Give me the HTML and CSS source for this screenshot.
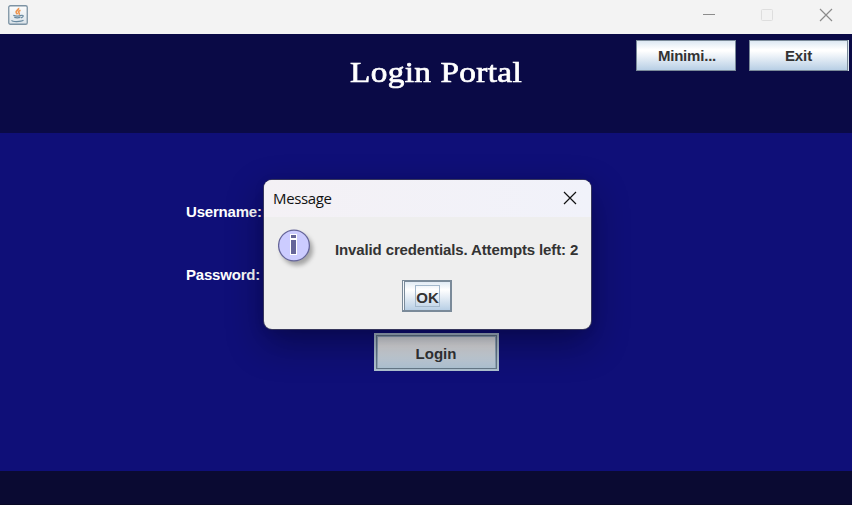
FILE: index.html
```html
<!DOCTYPE html>
<html lang="en">
<head>
<meta charset="utf-8">
<title>Login Portal</title>
<link rel="stylesheet" href="styles.css">
</head>
<body>
<div class="window">
  <div class="titlebar">
    <svg class="java" width="20" height="20" viewBox="0 0 20 20" fill="none">
      <defs><linearGradient id="tile" x1="0" y1="0" x2="0" y2="1"><stop offset="0" stop-color="#fdfdfd"/><stop offset="1" stop-color="#d9e2e9"/></linearGradient></defs>
      <rect x=".75" y=".75" width="18.5" height="18.5" rx="1.6" fill="url(#tile)" stroke="#7d93a4" stroke-width="1.3"/>
      <path d="M10.500 2.800c1 2-3.300 2.900-2.300 4.800.3.600.9 1.100 1.300 1.600M12.500 5.300c-2.500 1.200-2.200 1.900-1.300 3 .3.600 0 .9-.4 1.300" stroke="#ee9650" stroke-width="1.700"/>
      <path d="M5.300 10.400c2 .8 6.200.7 8.100 0M6.300 12.400c1.900.6 4.400.5 6.100 0M13.400 10.300c2.800-.5 2.200 2-.4 2.500M4 15.300c-1 1.600 9 1.700 11.500 0" stroke="#67889f" stroke-width="1.200"/>
    </svg>
    <svg class="controls" width="132" height="14" viewBox="0 0 132 14" fill="none">
      <path d="M1 6.500h12" stroke="#8c8c8c"/>
      <rect x="59.500" y="1.500" width="11" height="11" rx="1" stroke="#dedede"/>
      <path d="M118 1l12 12M130 1L118 13" stroke="#8b8b8b" stroke-width="1.200"/>
    </svg>
  </div>
  <header class="header">
    <h1 class="title">Login Portal</h1>
    <div class="actions">
      <button class="metal minimize">Minimi...</button>
      <button class="metal exit">Exit</button>
    </div>
  </header>
  <main class="main">
    <div class="labels">
      <label>Username:</label>
      <label>Password:</label>
    </div>
    <button class="login"><span>Login</span></button>
  </main>
  <footer class="footer"></footer>
  <section class="dialog" role="dialog">
    <div class="dialog-bar">
      <span>Message</span>
      <svg width="14" height="14" viewBox="0 0 14 14" fill="none"><path d="M1 1l12 12M13 1L1 13" stroke="#111" stroke-width="1.200"/></svg>
    </div>
    <div class="message">
      <svg class="info" width="42" height="42" viewBox="0 0 42 42">
        <circle cx="16" cy="16.500" r="15.400" fill="#ccccff" stroke="#666699" stroke-width="1.300"/>
        <path d="M12 5h7v5h-7zM12 10h7v16h-7z" fill="#fff"/>
        <path d="M13 6h5v3h-5zM13 11h5v14h-5z" fill="#666699"/>
      </svg>
      <p>Invalid credentials. Attempts left: 2</p>
    </div>
    <button class="ok"><span>OK</span></button>
  </section>
</div>
</body>
</html>
```
FILE: styles.css
```css
* { box-sizing: border-box; }
body { margin: 0; font: bold 15px/17px "Liberation Sans", sans-serif; color: #333; overflow: hidden; }
button { padding: 0; font: inherit; color: #333; border-radius: 0; letter-spacing: -.12px; }
svg { display: block; flex: none; }
.window { position: relative; width: 852px; height: 505px; display: flex; flex-direction: column; }
.titlebar { height: 34px; background: #f3f3f3; display: flex; justify-content: space-between; padding: 5px 18px 0 8px; }
.controls { margin-top: 3px; }
.header { height: 99px; background: #0a0a46; display: flex; justify-content: space-between; padding: 0 3px 0 350px; }
.title { margin: 19px 0 0; font: 400 30px/38px "Liberation Serif", serif; letter-spacing: .3px; word-spacing: .5px; transform: scaleX(1.11); transform-origin: left; -webkit-text-stroke: .7px #fff; color: #fff; white-space: nowrap; }
.actions { display: flex; gap: 13px; padding-top: 6px; }
.metal { width: 100px; height: 31px; border: 1px solid #7a8a99; background: linear-gradient(#dde8f3 0, #fff 30%, #fff 34%, #b8cfe5 100%); }
.minimize { padding-left: 2px; letter-spacing: -.2px; }
.exit { box-shadow: 1px 0 #dce5ed; width: 99px; margin-right: 1px; }
.main { height: 338px; background: #0f0f78; }
.labels { height: 200px; padding: 70px 0 0 186px; display: flex; flex-direction: column; gap: 46px; color: #fff; letter-spacing: -.2px; }
.login { display: block; width: 125px; height: 38px; margin-left: 374px; border: 2px solid #afc2d0; background: #afc2d0; letter-spacing: 0; }
.login span { display: flex; align-items: center; justify-content: center; height: 34px; padding: 2px 1px 0 0; border: 1px solid #667988; box-shadow: inset 1px 1px #92a8ba, inset -1px 0 #92a8ba; background: linear-gradient(#d8dcde, #e4e4e4 30%, #b0c4d5); }
.dialog { position: absolute; left: 264px; top: 180px; width: 327px; height: 149px; border-radius: 8px; background: #eee; box-shadow: 0 0 0 1px #36365c, 0 14px 36px rgba(0,0,20,.42), 0 2px 12px rgba(0,0,20,.08); }
.footer { flex: 1; background: #0a0a32; border-bottom: 1px solid #080825; }
.dialog-bar { height: 37px; display: flex; align-items: center; justify-content: space-between; padding: 0 14px 2px 9px; border-radius: 8px 8px 0 0; background: linear-gradient(90deg, #f4f1f5, #f1f2fa); color: #111; font: 400 15px/20px "Open Sans", sans-serif; }
.dialog-bar span { letter-spacing: -.35px; }
.message { display: flex; height: 63px; padding: 12px 0 0 14px; }
.info { filter: drop-shadow(3px 4px 2px rgba(0,0,0,.3)); }
.message p { margin: 12px 0 0 15px; white-space: nowrap; letter-spacing: -.125px; }
.ok { display: block; width: 50px; height: 32px; margin-left: 138px; border: 1px solid #7a8a99; border-right-width: 2px; border-bottom-width: 2px; background: linear-gradient(#dde8f3 0, #fff 30%, #b8cfe5 100%); box-shadow: inset 1px 0 #f4f7fb, inset 2px 1px #7a8a99; }
.ok span { width: 25px; height: 22px; margin: 0 0 0 12px; border: 1px solid #a3b8cc; line-height: 23px; display: flex; justify-content: center; }
```
